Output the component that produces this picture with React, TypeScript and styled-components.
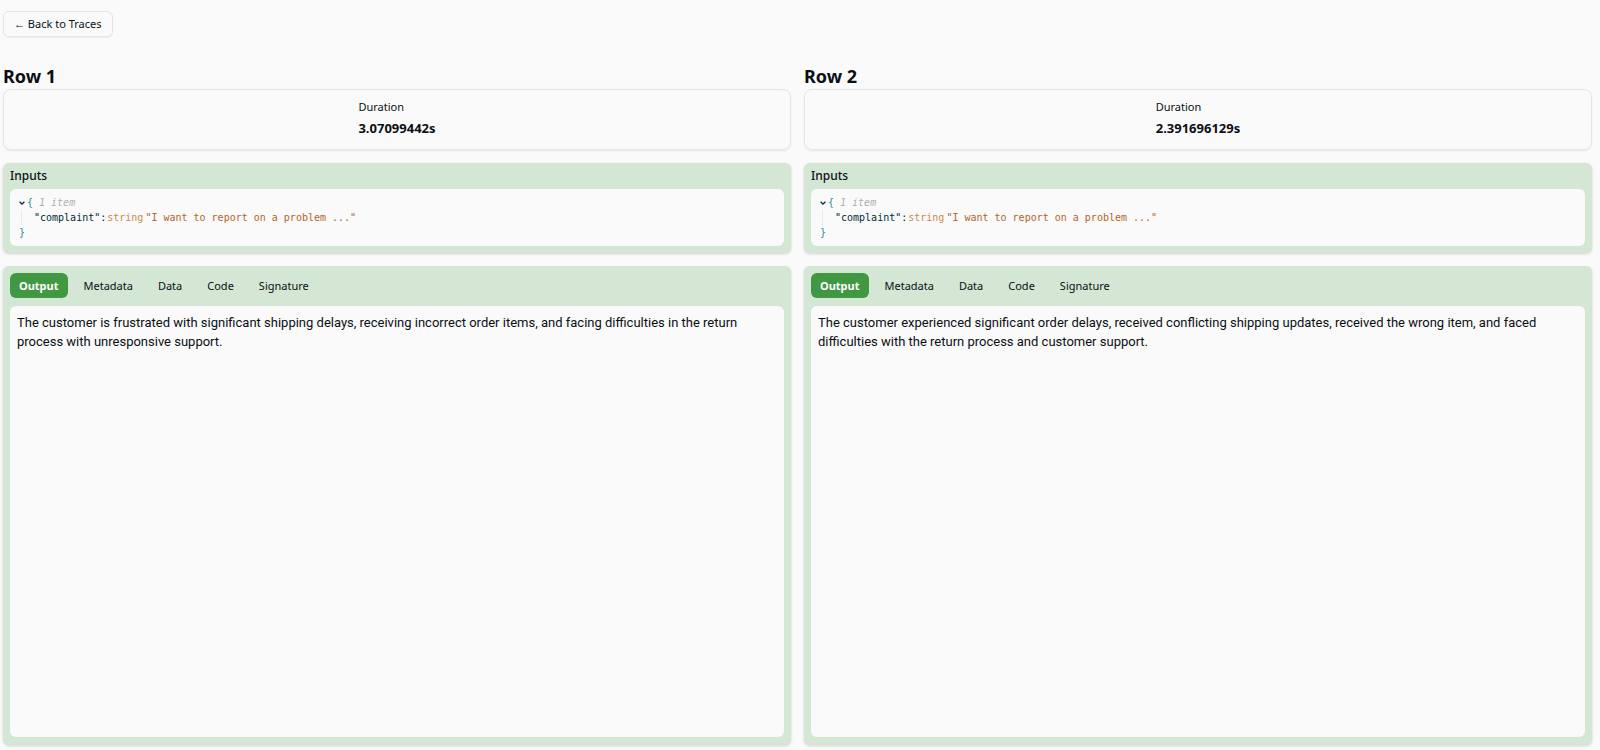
import { useState } from 'react';
import styled, { createGlobalStyle } from 'styled-components';

const SCRIPT = `"Noto Sans", "Open Sans", sans-serif`;

const GlobalStyle = createGlobalStyle`
  * { box-sizing: border-box; }
  body {
    margin: 0;
    background: #fafafa;
    color: #0b0f14;
    font-family: "Noto Sans", sans-serif;
  }
`;

const Page = styled.div`
  min-height: 100vh;
  display: flex;
  flex-direction: column;
  align-items: stretch;
  gap: 26px;
  padding: 11px 8px 5px 3px;
`;

const BackButton = styled.button`
  align-self: flex-start;
  height: 26px;
  padding: 0 10px;
  border: 1px solid #e4e6e8;
  border-radius: 6px;
  background: #fafafa;
  box-shadow: 0 1px 2px rgba(0, 0, 0, 0.05);
  color: #0b0f14;
  font: 400 11px/16px ${SCRIPT};
  cursor: pointer;
`;

const Columns = styled.main`
  flex: 1;
  display: grid;
  grid-template-columns: repeat(2, minmax(0, 1fr));
  gap: 13px;
`;

const Column = styled.section`
  display: flex;
  flex-direction: column;
  gap: 13px;
`;

const Heading = styled.header`
  display: flex;
  flex-direction: column;
`;

const Title = styled.h2`
  margin: 0;
  font: 700 18px/26px ${SCRIPT};
`;

const Metrics = styled.div`
  display: flex;
  justify-content: center;
  padding: 8px;
  height: 61px;
  border: 1px solid #e4e6e8;
  border-radius: 8px;
  box-shadow: 0 1px 2px rgba(0, 0, 0, 0.08);
`;

const Metric = styled.dl`
  margin: 0;
`;

const MetricName = styled.dt`
  font-size: 11px;
  line-height: 18px;
`;

const MetricValue = styled.dd`
  margin: 0;
  font-size: 13px;
  font-weight: 700;
  line-height: 25px;
`;

const Panel = styled.div<{ $fill?: boolean }>`
  display: flex;
  flex-direction: column;
  flex: ${(p) => (p.$fill ? 1 : 'none')};
  padding: ${(p) => (p.$fill ? '7px 7px 8px' : '0 7px 7px')};
  border-radius: 6px;
  background: #d3e7d4;
  box-shadow: 0 1px 3px rgba(0, 0, 0, 0.16);
`;

const PanelTitle = styled.h3`
  margin: 0;
  font-size: 12px;
  font-weight: 500;
  line-height: 26px;
`;

const Surface = styled.div`
  flex: 1;
  border-radius: 6px;
  background: #fafafa;
`;

const Json = styled(Surface)`
  padding: 6px 9px;
  color: #002b36;
  font: 10px/15px "DejaVu Sans Mono", monospace;
`;

const JsonLine = styled.div`
  display: flex;
  align-items: center;
`;

const JsonEntry = styled(JsonLine)`
  margin-left: 2px;
  padding-left: 12px;
  border-left: 1px solid #ebebeb;
`;

const Toggle = styled.button`
  display: flex;
  width: 8px;
  padding: 0;
  border: 0;
  background: none;
  color: #002b36;
  cursor: pointer;
`;

const Brace = styled.span`
  color: #368c9e;
`;

const Count = styled.em`
  margin-left: 6px;
  color: #b0b0b0;
`;

const TypeName = styled.span`
  margin: 0 2px 0 1px;
  color: #cb8a4b;
`;

const StringValue = styled.span`
  color: #b8642a;
`;

const TabList = styled.div`
  display: flex;
  gap: 7px;
  margin-bottom: 8px;
`;

const Tab = styled.button<{ $active: boolean }>`
  height: 25px;
  padding: 0 9px;
  border: 0;
  border-radius: 6px;
  background: ${(p) => (p.$active ? '#409843' : 'transparent')};
  color: ${(p) => (p.$active ? '#ffffff' : '#0b0f14')};
  font: ${(p) => (p.$active ? 700 : 400)} 11px/16px ${SCRIPT};
  cursor: pointer;
`;

const OutputText = styled.p`
  margin: 0;
  padding: 7px;
  font: 13px/19px Roboto, sans-serif;
`;

const TABS = ['Output', 'Metadata', 'Data', 'Code', 'Signature'];

const ROWS = [
  {
    title: 'Row 1',
    duration: '3.07099442s',
    output:
      'The customer is frustrated with significant shipping delays, receiving incorrect order items, and facing difficulties in the return process with unresponsive support.',
  },
  {
    title: 'Row 2',
    duration: '2.391696129s',
    output:
      'The customer experienced significant order delays, received conflicting shipping updates, received the wrong item, and faced difficulties with the return process and customer support.',
  },
];

function JsonView() {
  const [open, setOpen] = useState(true);
  return (
    <Json>
      <JsonLine>
        <Toggle aria-label="Toggle inputs" aria-expanded={open} onClick={() => setOpen(!open)}>
          <svg width="6" height="6" viewBox="0 0 6 6" fill="none" stroke="currentColor" strokeWidth="1.3">
            <path d="M0.6 1.8 3 4.2 5.4 1.8" />
          </svg>
        </Toggle>
        <Brace>{'{'}</Brace>
        <Count>1 item</Count>
      </JsonLine>
      {open && (
        <JsonEntry>
          <span>"complaint":</span>
          <TypeName>string</TypeName>
          <StringValue>"I want to report on a problem ..."</StringValue>
        </JsonEntry>
      )}
      <JsonLine>
        <Brace>{'}'}</Brace>
      </JsonLine>
    </Json>
  );
}

function TraceColumn({ title, duration, output }: (typeof ROWS)[number]) {
  const [active, setActive] = useState('Output');
  return (
    <Column>
      <Heading>
        <Title>{title}</Title>
        <Metrics>
          <Metric>
            <MetricName>Duration</MetricName>
            <MetricValue>{duration}</MetricValue>
          </Metric>
        </Metrics>
      </Heading>
      <Panel>
        <PanelTitle>Inputs</PanelTitle>
        <JsonView />
      </Panel>
      <Panel $fill>
        <TabList role="tablist">
          {TABS.map((tab) => (
            <Tab
              key={tab}
              role="tab"
              aria-selected={tab === active}
              $active={tab === active}
              onClick={() => setActive(tab)}
            >
              {tab}
            </Tab>
          ))}
        </TabList>
        <Surface role="tabpanel">{active === 'Output' && <OutputText>{output}</OutputText>}</Surface>
      </Panel>
    </Column>
  );
}

export default function App() {
  return (
    <>
      <GlobalStyle />
      <Page>
        <BackButton>← Back to Traces</BackButton>
        <Columns>
          {ROWS.map((row) => (
            <TraceColumn key={row.title} {...row} />
          ))}
        </Columns>
      </Page>
    </>
  );
}
